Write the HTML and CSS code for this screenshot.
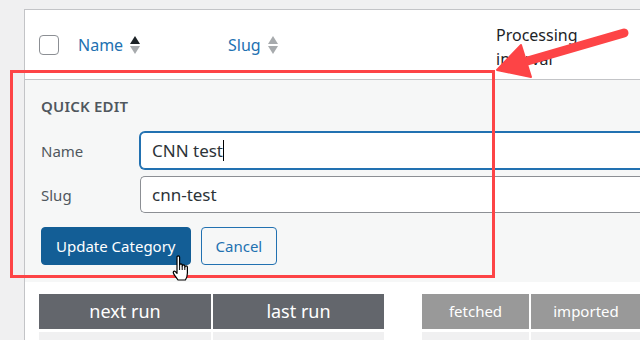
FILE: index.html
```html
<!DOCTYPE html>
<html lang="en">

<head>
    <meta charset="UTF-8">
    <meta name="viewport" content="width=device-width, initial-scale=1.0">
    <title>Quick Edit</title>
    <link rel="stylesheet" href="styles.css">
</head>

<body>
    <div class="page">
        <div class="panel">
            <div class="thead">
                <span class="check"></span>
                <a href="javascript:;" class="col col-name">Name
                    <span class="sort"><i class="up on"></i><i class="down"></i></span>
                </a>
                <a href="javascript:;" class="col col-slug">Slug
                    <span class="sort"><i class="up"></i><i class="down"></i></span>
                </a>
                <span class="col col-proc">Processing<br>interval</span>
            </div>

            <div class="quick-edit">
                <h4>Quick Edit</h4>
                <div class="field">
                    <label>Name</label>
                    <div class="input focus">CNN test<span class="caret"></span></div>
                </div>
                <div class="field">
                    <label>Slug</label>
                    <div class="input">cnn-test</div>
                </div>
                <div class="actions">
                    <a href="javascript:;" class="btn btn-primary">Update Category</a>
                    <a href="javascript:;" class="btn">Cancel</a>
                </div>
            </div>

            <div class="runs">
                <div class="grid grid-dark">
                    <div class="th">next run</div>
                    <div class="th">last run</div>
                    <div class="td"></div>
                    <div class="td"></div>
                </div>
                <div class="grid grid-light">
                    <div class="th">fetched</div>
                    <div class="th">imported</div>
                    <div class="td"></div>
                    <div class="td"></div>
                </div>
            </div>
        </div>

        <!-- 标注：红框 + 箭头 -->
        <svg class="marks" width="640" height="340" viewBox="0 0 640 340">
            <rect x="11.5" y="71.5" width="482" height="205" fill="none" stroke="#fd4446" stroke-width="3" />
            <line x1="624" y1="33" x2="524" y2="62" stroke="#fd4446" stroke-width="9" stroke-linecap="round" />
            <polygon points="497,70 521,45 531,77" fill="#fd4446" stroke="#fd4446" stroke-width="2" stroke-linejoin="round" />
        </svg>

        <!-- 鼠标手形 -->
        <svg class="cursor" width="20" height="28" viewBox="0 0 20 28">
            <path d="M5,2 C5,0.6 7.6,0.6 7.6,2 L7.6,10 C7.6,8.6 10.2,8.6 10.2,10 L10.2,11 C10.2,9.6 12.8,9.6 12.8,11 L12.8,12 C12.8,10.6 15.4,10.6 15.4,12 L15.4,18 C15.4,21 14.4,23.5 13.4,25 L6,25 C5,23.5 3,21 1.6,18.6 C0.6,16.8 2,15.4 3.4,16.6 L5,18.4 Z"
                fill="#fff" stroke="#000" stroke-width="1.2" stroke-linejoin="round" />
            <path d="M7.6,10 L7.6,15 M10.2,11 L10.2,15 M12.8,12 L12.8,15" stroke="#000" stroke-width="1" />
        </svg>
    </div>
</body>

</html>
```

FILE: styles.css
```css
* {
    margin: 0;
    padding: 0;
    box-sizing: border-box;
}

body {
    background-color: #f0f0f1;
    font-family: "Noto Sans", "Open Sans", sans-serif;
    color: #3c434a;
}

.page {
    position: relative;
    width: 640px;
    height: 340px;
    overflow: hidden;
    padding: 9px 0 0 24px;
}

.panel {
    background-color: #fff;
    border-top: 1px solid #c3c4c7;
    border-left: 1px solid #c3c4c7;
    height: 340px;
}

/* 表头 */
.thead {
    height: 70px;
    display: flex;
    align-items: center;
    border-bottom: 1px solid #c3c4c7;
    padding-left: 14px;
}

.check {
    width: 20px;
    height: 20px;
    border: 1px solid #8c8f94;
    border-radius: 4px;
    background-color: #fff;
    margin-right: 19px;
}

.col {
    font-size: 16px;
    text-decoration: none;
    color: #2271b1;
    display: flex;
    align-items: center;
}

.col-name {
    width: 150px;
}

.col-slug {
    width: 268px;
}

.col-proc {
    color: #1d2327;
    line-height: 24px;
    display: block;
    margin-top: 4px;
}

.sort {
    display: flex;
    flex-direction: column;
    gap: 2px;
    margin-left: 7px;
}

.sort i {
    display: block;
    width: 0;
    height: 0;
    border-left: 5px solid transparent;
    border-right: 5px solid transparent;
}

.sort .up {
    border-bottom: 8px solid #a7aaad;
}

.sort .down {
    border-top: 8px solid #a7aaad;
}

.sort .up.on {
    border-bottom-color: #1d2327;
}

/* 快速编辑 */
.quick-edit {
    background-color: #f6f7f7;
    height: 202px;
    padding: 16px 0 0 16px;
}

.quick-edit h4 {
    font-size: 15px;
    font-weight: 600;
    text-transform: uppercase;
    color: #50575e;
    letter-spacing: 0.2px;
    margin-bottom: 16px;
}

.field {
    display: flex;
    align-items: center;
    margin-bottom: 7px;
}

.field label {
    width: 99px;
    font-size: 15px;
    color: #50575e;
}

.input {
    flex: 1;
    height: 37px;
    border: 1px solid #8c8f94;
    border-right: 0;
    border-radius: 5px 0 0 5px;
    background-color: #fff;
    font-size: 17px;
    color: #2c3338;
    line-height: 35px;
    padding-left: 11px;
}

.input.focus {
    border-color: #2271b1;
    box-shadow: 0 0 0 1px #2271b1;
}

.caret {
    display: inline-block;
    width: 1px;
    height: 21px;
    background-color: #000;
    vertical-align: -4px;
}

.actions {
    display: flex;
    gap: 10px;
    margin-top: 14px;
}

.btn {
    height: 38px;
    line-height: 36px;
    padding: 0 14px;
    font-size: 15px;
    text-decoration: none;
    color: #2271b1;
    border: 1px solid #2271b1;
    border-radius: 4px;
    background-color: #f6f7f7;
}

.btn-primary {
    background-color: #135e96;
    border-color: #135e96;
    color: #fff;
}

/* 下方两个小表 */
.runs {
    display: flex;
    gap: 38px;
    padding: 12px 0 0 14px;
}

.grid {
    display: grid;
    gap: 2px;
    row-gap: 3px;
}

.grid-dark {
    grid-template-columns: 172px 171px;
}

.grid-light {
    grid-template-columns: 107px 110px;
}

.th {
    height: 35px;
    color: #fff;
    text-align: center;
    line-height: 35px;
}

.grid-dark .th {
    background-color: #63666c;
    font-size: 18px;
}

.grid-light .th {
    background-color: #999;
    font-size: 15px;
}

.td {
    height: 20px;
    background-color: #f0f0f1;
}

/* 标注层 */
.marks {
    position: absolute;
    left: 0;
    top: 0;
    pointer-events: none;
}

.cursor {
    position: absolute;
    left: 172px;
    top: 255px;
    pointer-events: none;
}
```
